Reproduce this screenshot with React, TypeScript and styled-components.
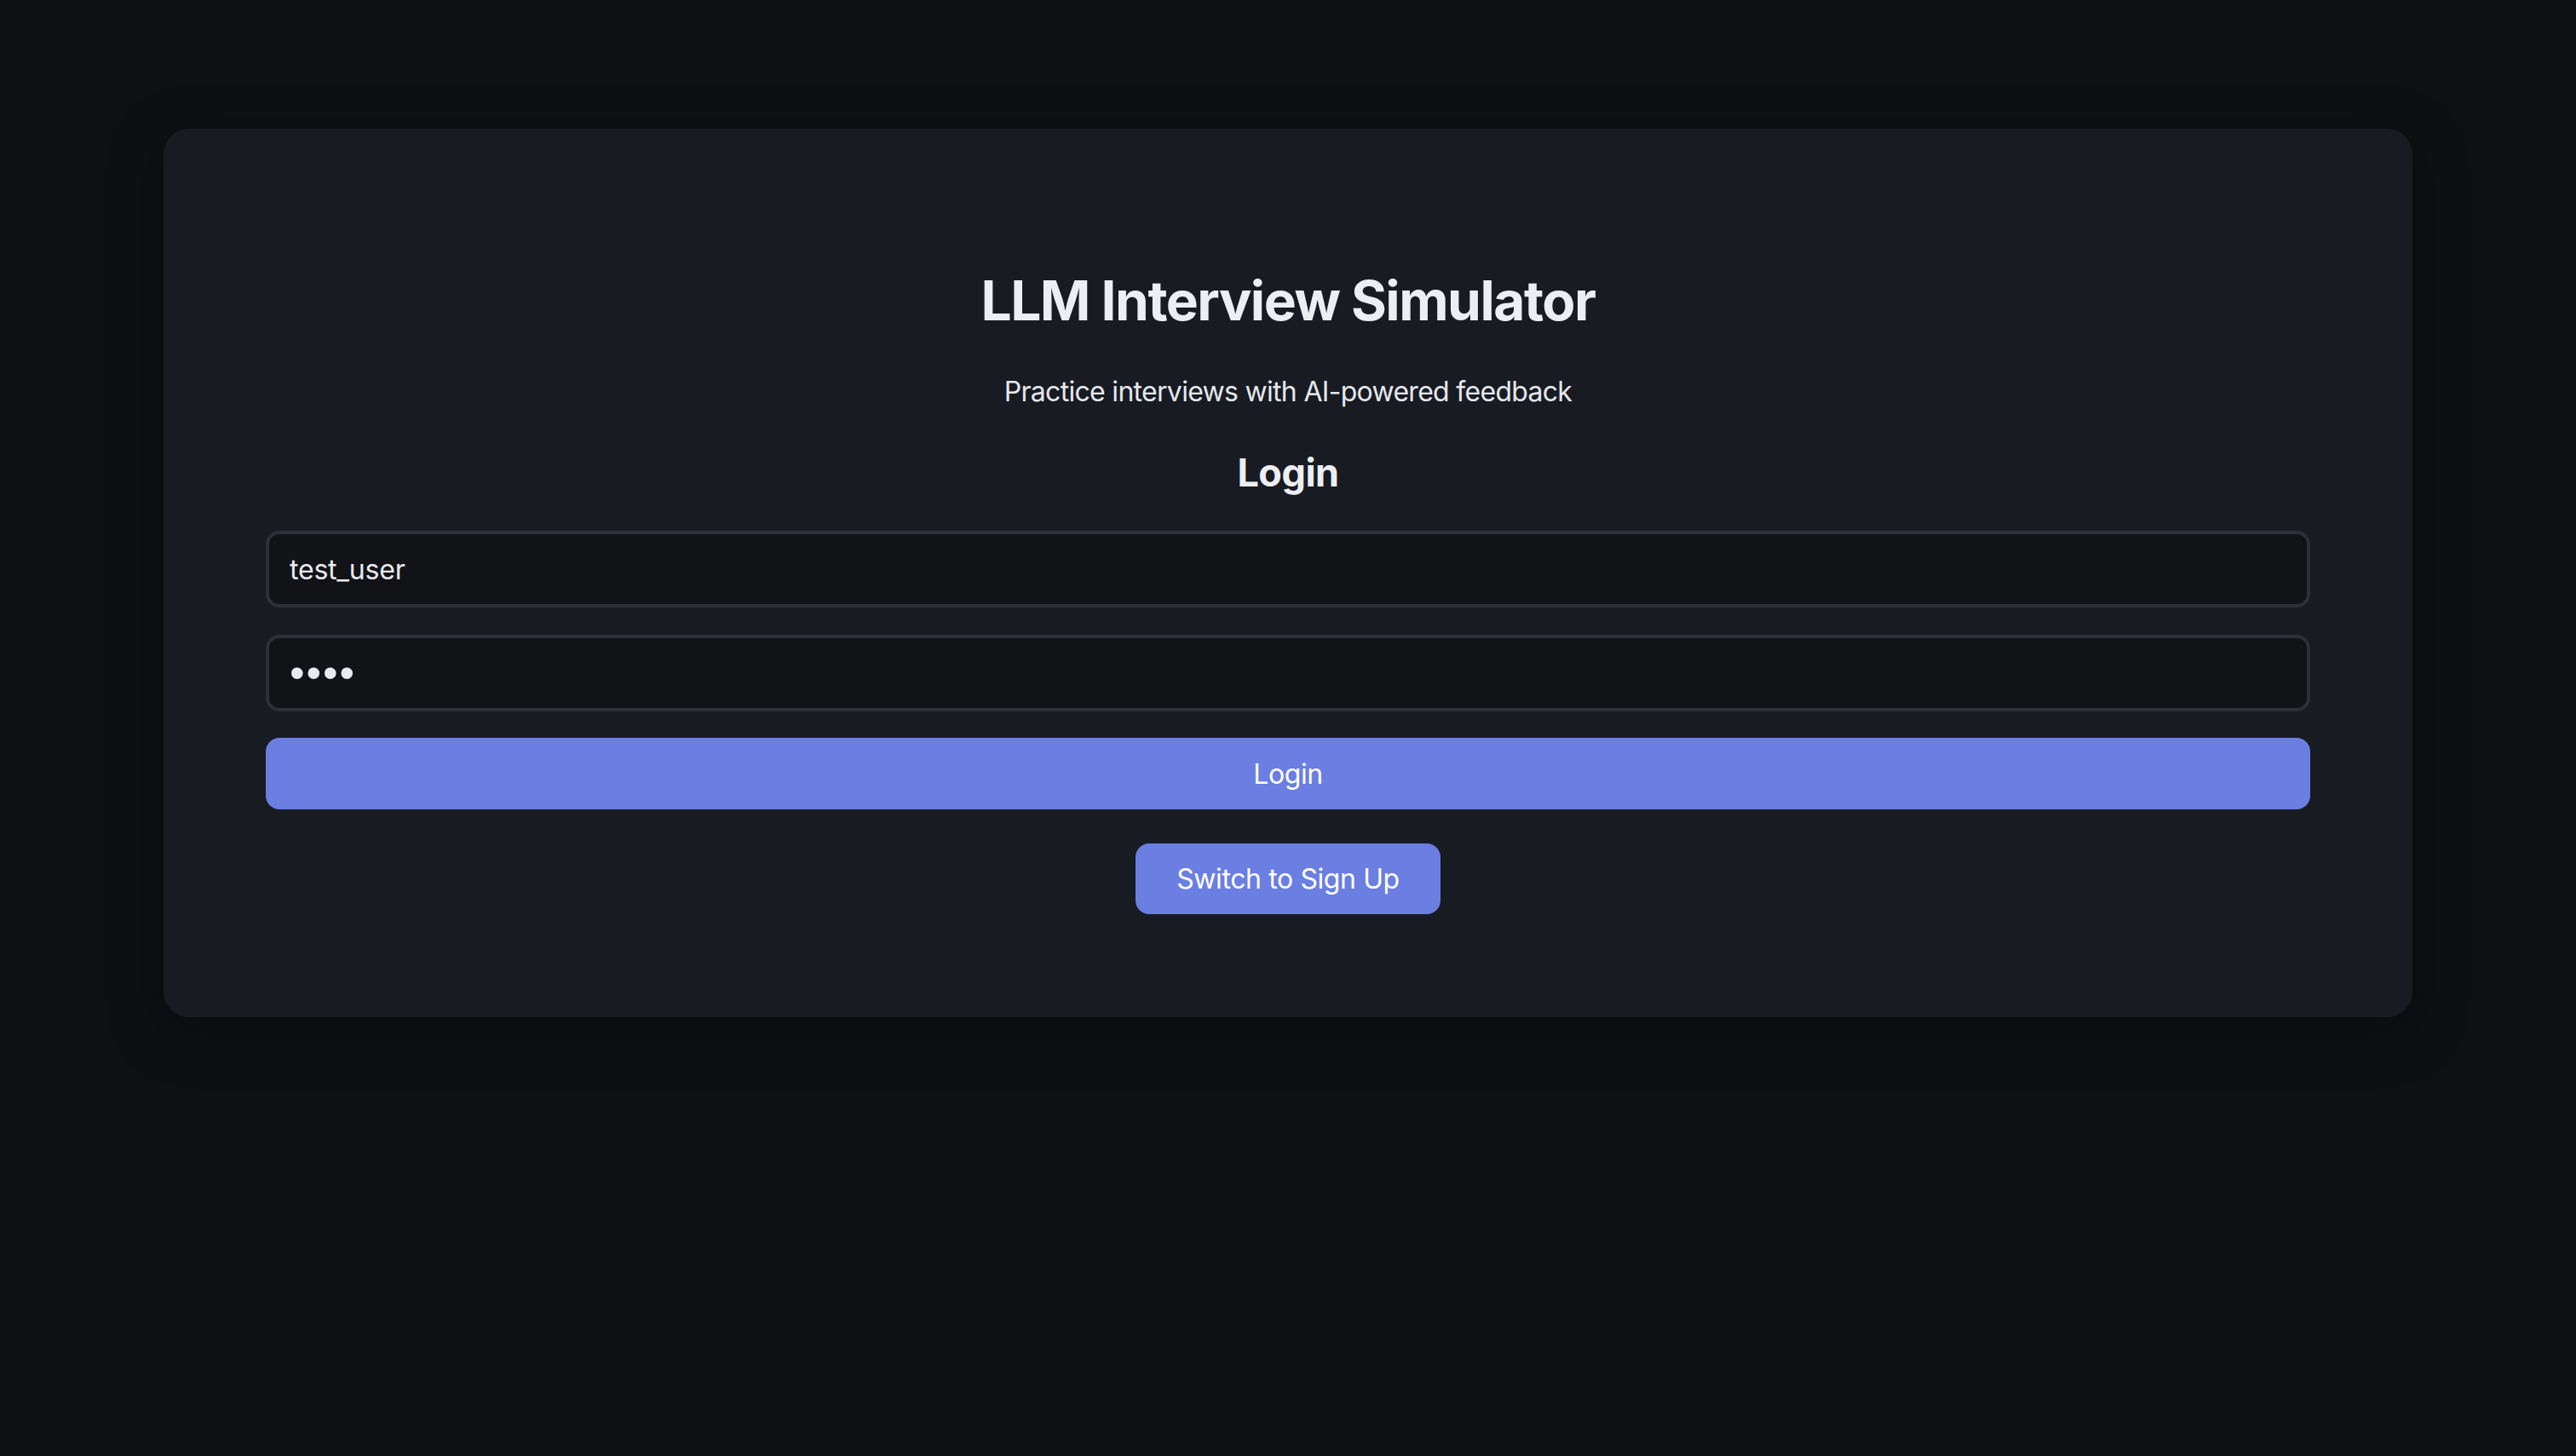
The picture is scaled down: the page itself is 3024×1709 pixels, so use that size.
import React, { useState } from "react";
import styled, { createGlobalStyle } from "styled-components";

const GlobalStyle = createGlobalStyle`
  html, body {
    margin: 0;
    padding: 0;
    background-color: #0f1014;
    font-family: Inter, "Noto Sans", "Liberation Sans", sans-serif;
    color: #e8eaf0;
  }
  * {
    box-sizing: border-box;
  }
`;

const Page = styled.div`
  min-height: 1709px;
  padding: 151px 192px 0;
`;

const Card = styled.div`
  display: flex;
  flex-direction: column;
  align-items: stretch;
  padding: 163px 120px 121px;
  background-color: #181b22;
  border-radius: 30px;
  box-shadow: 0 16px 64px rgba(0, 0, 0, 0.35);
`;

const Title = styled.h1`
  margin: 0;
  font-size: 64px;
  line-height: 77px;
  font-weight: 700;
  letter-spacing: -1.5px;
  text-align: center;
  color: #eceef3;
`;

const Subtitle = styled.p`
  margin: 49px 0 0;
  font-size: 32px;
  line-height: 39px;
  font-weight: 400;
  letter-spacing: -0.7px;
  text-align: center;
  color: #e6e8ee;
`;

const Heading = styled.h2`
  margin: 49px 0 0;
  font-size: 45px;
  line-height: 54px;
  font-weight: 700;
  letter-spacing: -0.5px;
  text-align: center;
  color: #eceef3;
`;

const Form = styled.form`
  display: flex;
  flex-direction: column;
  gap: 32px;
  margin-top: 41px;
`;

const Input = styled.input<{ $secret?: boolean }>`
  width: 100%;
  height: 90px;
  padding: 0 24px;
  font-family: ${(p) =>
    p.$secret ? `"Liberation Sans", Arial, sans-serif` : "inherit"};
  font-size: ${(p) => (p.$secret ? "50px" : "32px")};
  letter-spacing: ${(p) => (p.$secret ? "2px" : "-0.2px")};
  color: #e8eaf0;
  background-color: #121317;
  border: 4px solid #2d3039;
  border-radius: 16px;
  outline: none;
`;

const Button = styled.button<{ $wide?: boolean }>`
  height: ${(p) => (p.$wide ? "84px" : "83px")};
  width: ${(p) => (p.$wide ? "100%" : "auto")};
  padding: 0 48px;
  margin-top: ${(p) => (p.$wide ? "-1px" : "0")};
  font-family: inherit;
  font-size: 32px;
  font-weight: 400;
  letter-spacing: -0.4px;
  color: #ffffff;
  background-color: #6b7ee2;
  border: none;
  border-radius: 16px;
  cursor: pointer;
`;

const SwitchRow = styled.div`
  display: flex;
  justify-content: center;
  margin-top: 40px;
`;

const App = () => {
  const [credentials, setCredentials] = useState({
    username: "test_user",
    password: "test",
  });

  const handleInputChange = (e: React.ChangeEvent<HTMLInputElement>) => {
    const { name, value } = e.target;
    setCredentials((prev) => ({ ...prev, [name]: value }));
  };

  const handleSubmit = (e: React.FormEvent) => {
    e.preventDefault();
  };

  return (
    <>
      <GlobalStyle />
      <Page>
        <Card>
          <Title>LLM Interview Simulator</Title>
          <Subtitle>Practice interviews with AI-powered feedback</Subtitle>
          <Heading>Login</Heading>
          <Form onSubmit={handleSubmit}>
            <Input
              type="text"
              name="username"
              value={credentials.username}
              onChange={handleInputChange}
            />
            <Input
              $secret
              type="password"
              name="password"
              value={credentials.password}
              onChange={handleInputChange}
            />
            <Button $wide type="submit">
              Login
            </Button>
          </Form>
          <SwitchRow>
            <Button type="button">Switch to Sign Up</Button>
          </SwitchRow>
        </Card>
      </Page>
    </>
  );
};

export default App;
